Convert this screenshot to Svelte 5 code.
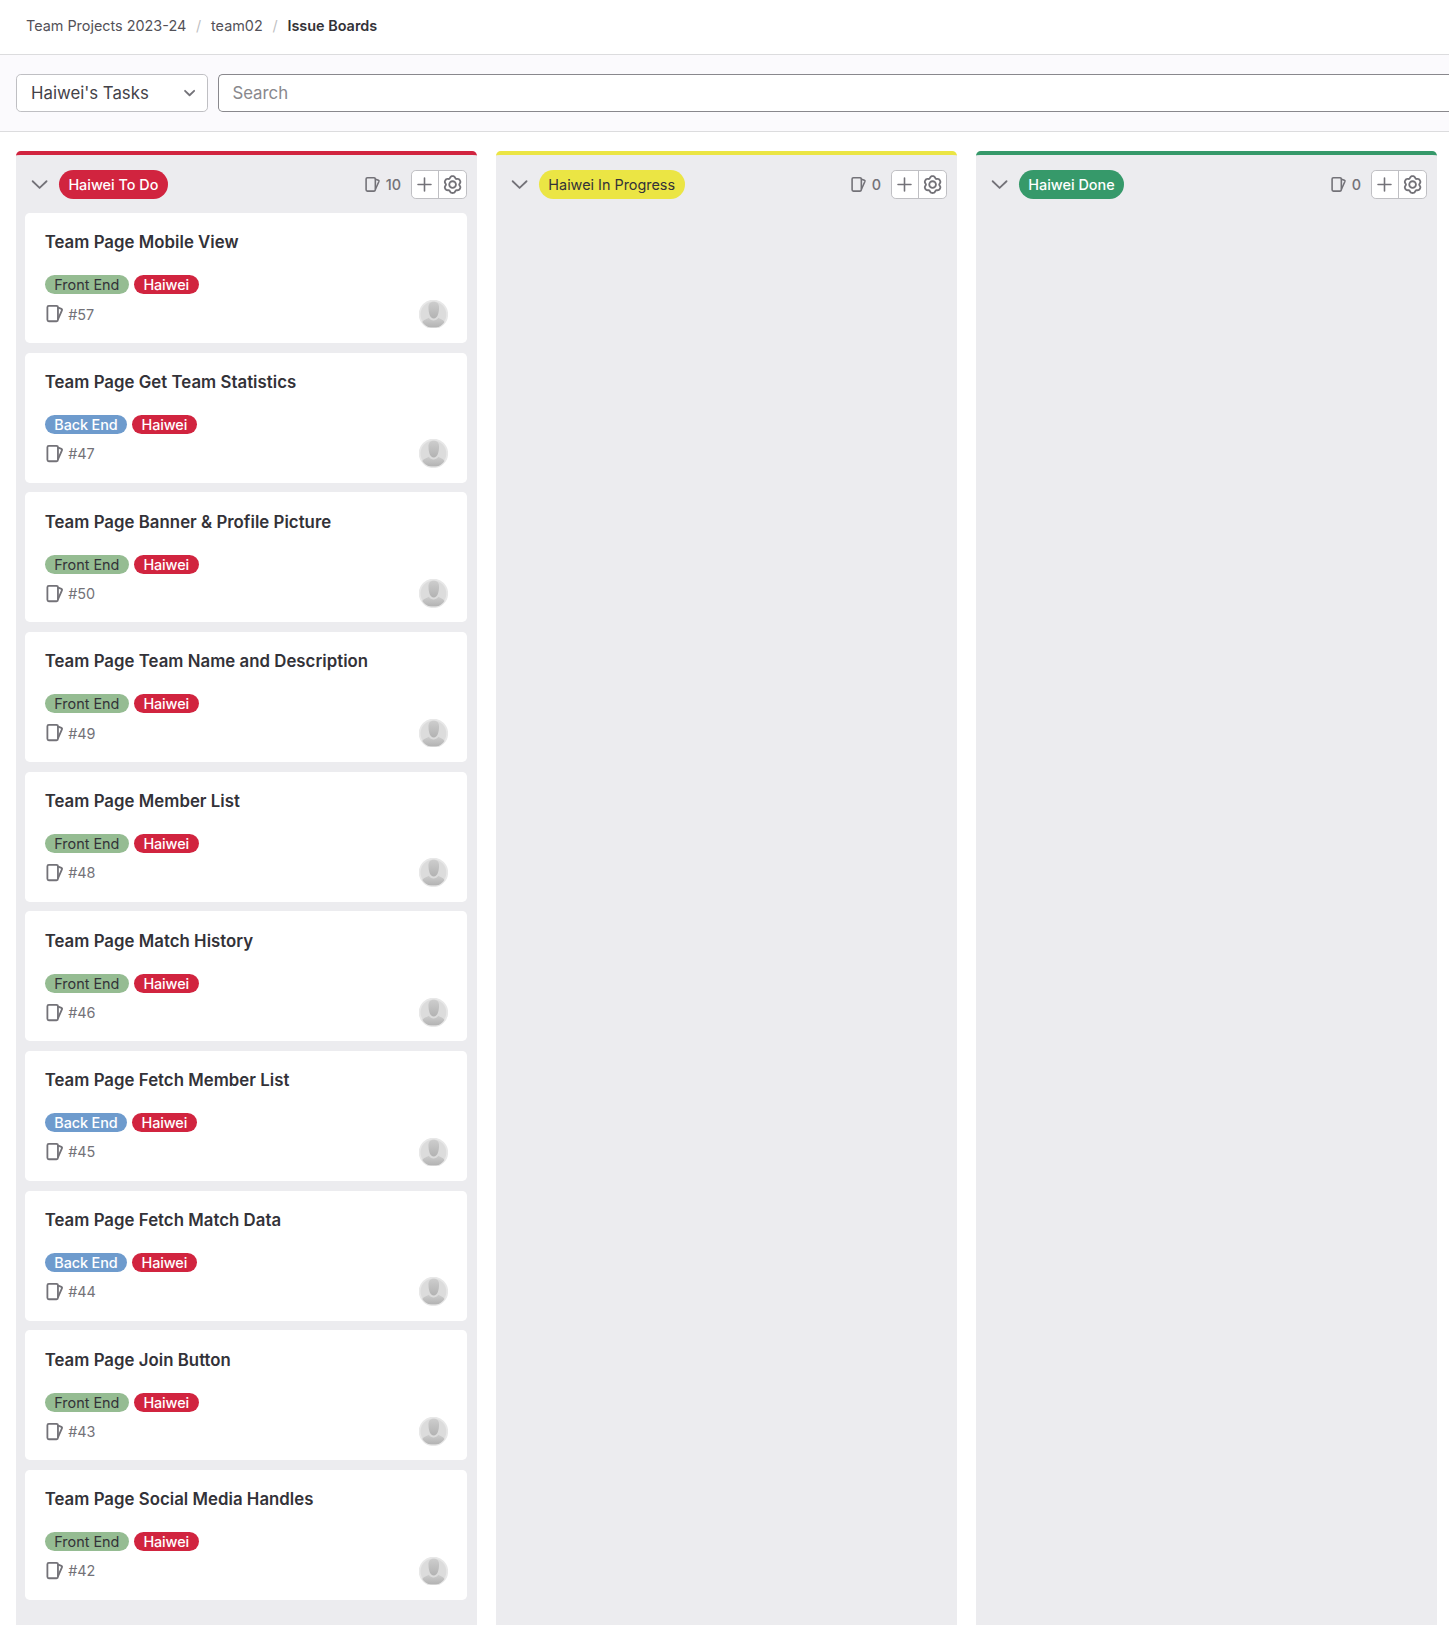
<script>
  const columns = [
    {
      name: 'Haiwei To Do', tone: 'red', count: 10,
      cards: [
        ['Team Page Mobile View', 'Front End', 57],
        ['Team Page Get Team Statistics', 'Back End', 47],
        ['Team Page Banner & Profile Picture', 'Front End', 50],
        ['Team Page Team Name and Description', 'Front End', 49],
        ['Team Page Member List', 'Front End', 48],
        ['Team Page Match History', 'Front End', 46],
        ['Team Page Fetch Member List', 'Back End', 45],
        ['Team Page Fetch Match Data', 'Back End', 44],
        ['Team Page Join Button', 'Front End', 43],
        ['Team Page Social Media Handles', 'Front End', 42]
      ]
    },
    { name: 'Haiwei In Progress', tone: 'yellow', count: 0, cards: [] },
    { name: 'Haiwei Done', tone: 'green', count: 0, cards: [] }
  ];

  // Six-lobed gear outline around the centre of a 16-unit box
  const gear = 'M' + Array.from({ length: 72 }, (_, i) => {
    const a = (i * Math.PI) / 36;
    const r = 6.45 + 0.75 * Math.cos(6 * a) - 0.18 * Math.cos(12 * a);
    return `${(8 + r * Math.sin(a)).toFixed(2)} ${(8 - r * Math.cos(a)).toFixed(2)}`;
  }).join('L') + 'Z';
</script>

{#snippet issueIcon()}
  <svg class="issue-icon" viewBox="0 0 16 16">
    <rect x="2" y="1.6" width="8.8" height="12.8" rx="1.2" />
    <path d="M11 3.100l2.700 1c.5.2.7.6.5 1.1L11 12.400" />
  </svg>
{/snippet}

<main>
  <nav>
    <span>Team Projects 2023-24</span><i>/</i><span>team02</span><i>/</i><b>Issue Boards</b>
  </nav>
  <div class="filters">
    <button class="picker">
      <span>Haiwei's Tasks</span>
      <svg viewBox="0 0 16 16"><path d="M4.2 6.5L8 10.2l3.8-3.7" /></svg>
    </button>
    <div class="search">Search</div>
  </div>
  <div class="board">
    {#each columns as col}
      <section class="column {col.tone}">
        <header>
          <svg class="chevron" viewBox="0 0 16 16"><path d="M2.2 5.2L8 10.8l5.8-5.6" /></svg>
          <span class="label big {col.tone}">{col.name}</span>
          <span class="count">{@render issueIcon()}{col.count}</span>
          <div class="actions">
            <button aria-label="Create new issue">
              <svg viewBox="0 0 16 16"><path d="M8 1.9v12.2M1.9 8h12.2" /></svg>
            </button>
            <button aria-label="Edit list settings">
              <svg viewBox="0 0 16 16"><path d={gear} /><circle cx="8" cy="8" r="2.8" /></svg>
            </button>
          </div>
        </header>
        <div class="cards">
          {#each col.cards as [title, area, id]}
            <article>
              <h4>{title}</h4>
              <div class="labels">
                <span class="label {area === 'Front End' ? 'front' : 'back'}">{area}</span>
                <span class="label red">Haiwei</span>
              </div>
              <footer>
                <span class="id">{@render issueIcon()}#{id}</span>
                <svg class="avatar" viewBox="0 0 24 24">
                  <defs>
                    <linearGradient id="shade{id}" x1="0" y1="0" x2="0" y2="1">
                      <stop offset="0" stop-color="#cdcdcd" />
                      <stop offset="1" stop-color="#b2b2b2" />
                    </linearGradient>
                    <clipPath id="round{id}"><circle cx="12" cy="12" r="11.2" /></clipPath>
                  </defs>
                  <circle cx="12" cy="12" r="11.5" fill="#dcdcdc" stroke="#e8e8e8" />
                  <g clip-path="url(#round{id})" fill="url(#shade{id})">
                    <path d="M2.500 19c.8-2.500 3.800-2.900 5.700-4.200 1 1.500 2.300 2.300 3.900 2.300s3-.8 4-2.300c1.900 1.300 4.700 1.700 5.500 4.200L18 23H6z" />
                    <path d="M12.300 1.500c3 0 4.500 1.800 4.400 5-.1 4.500-1.300 9-4.400 9s-4.300-4.500-4.400-9c-.1-3.200 1.400-5 4.400-5z" />
                  </g>
                </svg>
              </footer>
            </article>
          {/each}
        </div>
      </section>
    {/each}
  </div>
</main>

<style>
  :global(body) { margin: 0; overflow: hidden; background: #fff; }
  * { box-sizing: border-box; }
  main {
    height: 1625px;
    overflow: hidden;
    display: flex;
    flex-direction: column;
    font-family: Inter, sans-serif;
    font-size: 14.4px;
    color: #333238;
  }
  svg { fill: none; stroke: #737278; stroke-width: 1.5; stroke-linecap: round; stroke-linejoin: round; flex: none; }
  nav {
    height: 55px;
    flex: none;
    padding: 0 26px 4px;
    display: flex;
    align-items: center;
    border-bottom: 1px solid #dcdcde;
    color: #535158;
    white-space: nowrap;
  }
  nav i { font-style: normal; color: #bfbfc3; width: 24.8px; text-align: center; }
  nav b { font-weight: 600; color: #333238; }
  .filters {
    height: 77px;
    flex: none;
    display: flex;
    gap: 10px;
    padding: 19px 0 0 16px;
    background: #fbfafd;
    border-bottom: 1px solid #dcdcde;
    font-size: 16.8px;
  }
  .picker {
    width: 192px;
    height: 38px;
    padding: 0 8px 1px 14px;
    display: flex;
    align-items: center;
    justify-content: space-between;
    font: inherit;
    color: #434248;
    background: #fff;
    border: 1px solid #bfbfc3;
    border-radius: 4.8px;
  }
  .picker svg { width: 19.2px; height: 19.2px; }
  .search {
    flex: 1;
    height: 38px;
    padding-left: 13.4px;
    line-height: 37px;
    color: #89888d;
    background: #fff;
    border: 1px solid #89888d;
    border-right: 0;
    border-radius: 4.8px 0 0 4.8px;
  }
  .board { flex: 1; min-height: 0; display: flex; gap: 19.2px; padding: 19px 0 0 16px; }
  .column {
    width: 460.8px;
    flex: none;
    background: #ececef;
    border-top: 4px solid;
    border-radius: 4.8px 4.8px 0 0;
  }
  .column.red { border-color: #d1243f; }
  .column.yellow { border-color: #ebe544; }
  .column.green { border-color: #36996a; }
  header { height: 58px; padding: 1.4px 10px 0; display: flex; align-items: center; }
  .chevron { width: 19.2px; height: 19.2px; margin: 0 9.6px 0 4px; }
  .label {
    height: 19.2px;
    padding: 0 9.6px;
    border-radius: 12px;
    display: inline-flex;
    align-items: center;
    white-space: nowrap;
  }
  .label.big { height: 28.8px; border-radius: 14.4px; }
  .label.red { background: #d1243f; color: #fff; font-weight: 500; }
  .label.yellow { background: #ebe544; color: #333238; }
  .label.green { background: #36996a; color: #fff; font-weight: 500; }
  .label.front { background: #95bc92; color: #333238; }
  .label.back { background: #6e9bcd; color: #fff; font-weight: 500; }
  .labels .label.red, .labels .label.back { letter-spacing: -0.1px; }
  .count { margin-left: auto; display: flex; align-items: center; gap: 5px; color: #737278; font-weight: 500; }
  .count .issue-icon { width: 16.8px; height: 16.8px; }
  .actions {
    display: flex;
    width: 56px;
    height: 28.8px;
    margin-left: 9.8px;
    border: 1px solid #bfbfc3;
    border-radius: 4.8px;
    background: #fff;
  }
  .actions button { flex: 1; display: grid; place-items: center; padding: 0; border: 0; background: none; }
  .actions button:first-child { flex: 0 0 26px; }
  .actions button + button { border-left: 1px solid #bfbfc3; }
  .actions svg { width: 19.2px; height: 19.2px; }
  .actions button:first-child svg { width: 17px; height: 17px; }
  .cards { padding: 0 9.6px 0 9px; display: flex; flex-direction: column; gap: 9.6px; }
  article { height: 130.07px; padding: 20.4px 19.2px 0 19.7px; border-radius: 4.8px; background: #fff; }
  h4 { margin: 0; font-size: 16.8px; line-height: 19.2px; font-weight: 600; letter-spacing: 0.03px; white-space: nowrap; }
  .labels { display: flex; gap: 4.8px; margin-top: 22.7px; }
  footer { display: flex; justify-content: space-between; align-items: center; height: 28.8px; margin-top: 5.2px; }
  .id { display: flex; align-items: center; gap: 4.3px; color: #737278; }
  .id .issue-icon { width: 19.2px; height: 19.2px; }
  .avatar { width: 28.8px; height: 28.8px; stroke: none; }
</style>
